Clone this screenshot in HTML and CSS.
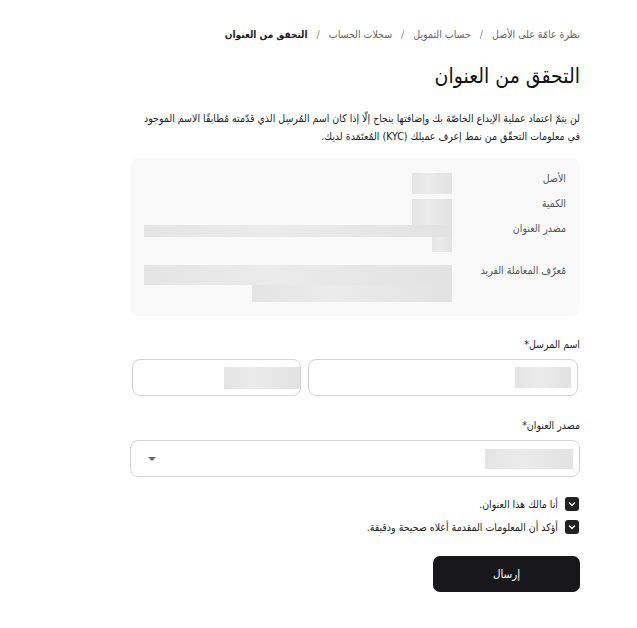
FILE: index.html
```
<!DOCTYPE html>
<html lang="ar" dir="rtl">
<head>
    <meta charset="UTF-8">
    <meta name="viewport" content="width=device-width, initial-scale=1.0">
    <title>التحقق من العنوان</title>
    <link rel="stylesheet" href="styles.css">
</head>
<body>
    <div class="page">
        <div class="breadcrumb">
            <a href="#">نظرة عامّة على الأصل</a>
            <span class="sep">/</span>
            <a href="#">حساب التمويل</a>
            <span class="sep">/</span>
            <a href="#">سجلات الحساب</a>
            <span class="sep">/</span>
            <span class="current">التحقق من العنوان</span>
        </div>

        <h1>التحقق من العنوان</h1>

        <p class="intro">لن يتمّ اعتماد عملية الإيداع الخاصّة بك وإضافتها بنجاح إلّا إذا كان اسم المُرسِل الذي قدّمته مُطابقًا الاسم الموجود في معلومات التحقّق من نمط إعرف عميلك (KYC) المُعتَمَدة لديك.</p>

        <div class="details">
            <div class="label">الأصل</div>
            <div class="value"><span class="blur b-asset"></span></div>

            <div class="label">الكمية</div>
            <div class="value"><span class="blur b-amount"></span></div>

            <div class="label">مصدر العنوان</div>
            <div class="value">
                <span class="blur b-line"></span>
                <span class="blur b-tail"></span>
            </div>

            <div class="label">مُعرّف المعاملة الفريد</div>
            <div class="value">
                <span class="blur b-long"></span>
                <span class="blur b-mid"></span>
            </div>
        </div>

        <div class="field">
            <label>اسم المرسل*</label>
            <div class="name-row">
                <div class="input wide"><span class="blur b-input"></span></div>
                <div class="input narrow"><span class="blur b-input2"></span></div>
            </div>
        </div>

        <div class="field">
            <label>مصدر العنوان*</label>
            <div class="input select">
                <span class="blur b-select"></span>
                <span class="caret"></span>
            </div>
        </div>

        <div class="checks">
            <div class="check">
                <span class="box"><svg width="10" height="10" viewBox="0 0 10 10"><path d="M2.5 4 L5 6.5 L7.5 4" fill="none" stroke="#fff" stroke-width="1.2" stroke-linecap="round" stroke-linejoin="round"/></svg></span>
                <span>أنا مالك هذا العنوان.</span>
            </div>
            <div class="check">
                <span class="box"><svg width="10" height="10" viewBox="0 0 10 10"><path d="M2.5 4 L5 6.5 L7.5 4" fill="none" stroke="#fff" stroke-width="1.2" stroke-linecap="round" stroke-linejoin="round"/></svg></span>
                <span>أؤكد أن المعلومات المقدمة أعلاه صحيحة ودقيقة.</span>
            </div>
        </div>

        <button class="submit">إرسال</button>
    </div>
</body>
</html>
```

FILE: styles.css
```
* {
    margin: 0;
    padding: 0;
    box-sizing: border-box;
}

body {
    font-family: "DejaVu Sans Condensed", "DejaVu Sans", sans-serif;
    background: #fff;
    color: #1e1e1e;
}

.page {
    width: 450px;
    margin-right: 57px;
    padding-top: 26px;
}

.breadcrumb {
    font-size: 10.5px;
    color: #666;
    line-height: 16px;
}

.breadcrumb a {
    color: #666;
    text-decoration: none;
}

.breadcrumb .sep {
    margin: 0 6px;
    color: #888;
}

.breadcrumb .current {
    color: #1e1e1e;
    font-weight: bold;
    font-size: 10px;
}

h1 {
    font-size: 21px;
    font-weight: normal;
    line-height: 30px;
    margin-top: 18px;
    color: #111;
}

.intro {
    font-size: 10.5px;
    line-height: 18px;
    margin-top: 18px;
    color: #222;
}

.details {
    margin-top: 13px;
    background: #f9f9f9;
    border-radius: 8px;
    padding: 13px 14px 14px;
    display: grid;
    grid-template-columns: 100px 1fr;
    column-gap: 14px;
    row-gap: 11px;
}

.details .label {
    font-size: 10.5px;
    line-height: 14px;
    color: #555;
}

.details .value {
    display: flex;
    flex-direction: column;
    align-items: flex-start;
    min-height: 14px;
}

.blur {
    display: block;
    background: linear-gradient(90deg, #e4e4e4, #ebebeb 40%, #e2e2e2);
}

.b-asset { width: 40px; height: 21px; margin-top: 2px; margin-bottom: -9px; }
.b-amount { width: 40px; height: 26px; margin-top: 3px; margin-bottom: -15px; }
.b-line { width: 308px; height: 12px; margin-top: 4px; }
.b-tail { width: 20px; height: 15px; }
.b-long { width: 308px; height: 20px; margin-top: 2px; }
.b-mid { width: 200px; height: 17px; }

.field {
    margin-top: 20px;
}

.field + .field {
    margin-top: 21px;
}

.field label {
    display: block;
    font-size: 10.5px;
    line-height: 16px;
    margin-bottom: 7px;
    color: #1e1e1e;
}

.name-row {
    display: flex;
    gap: 7px;
    padding: 0 2px;
}

.input {
    height: 37px;
    border: 1px solid #d4d4d4;
    border-radius: 8px;
    background: #fff;
    display: flex;
    align-items: center;
    padding: 0 6px;
}

.input.wide {
    width: 270px;
}

.input.narrow {
    flex: 1;
    padding: 0;
}

.b-input { width: 56px; height: 21px; }
.b-input2 { width: 76px; height: 22px; }

.select {
    justify-content: space-between;
    padding: 0 6px 0 17px;
}

.b-select { width: 88px; height: 20px; }

.caret {
    width: 0;
    height: 0;
    border-left: 4px solid transparent;
    border-right: 4px solid transparent;
    border-top: 4px solid #666;
}

.checks {
    margin-top: 20px;
    padding-right: 1px;
}

.check {
    display: flex;
    align-items: center;
    gap: 7px;
    font-size: 10.5px;
    line-height: 14px;
    color: #222;
    margin-bottom: 9px;
}

.check .box {
    width: 14px;
    height: 14px;
    border-radius: 3px;
    background: #222;
    display: flex;
    align-items: center;
    justify-content: center;
}

.submit {
    margin-top: 13px;
    width: 147px;
    height: 36px;
    border: none;
    border-radius: 7px;
    background: #18181b;
    color: #fff;
    font-family: inherit;
    font-size: 11.5px;
}
```
